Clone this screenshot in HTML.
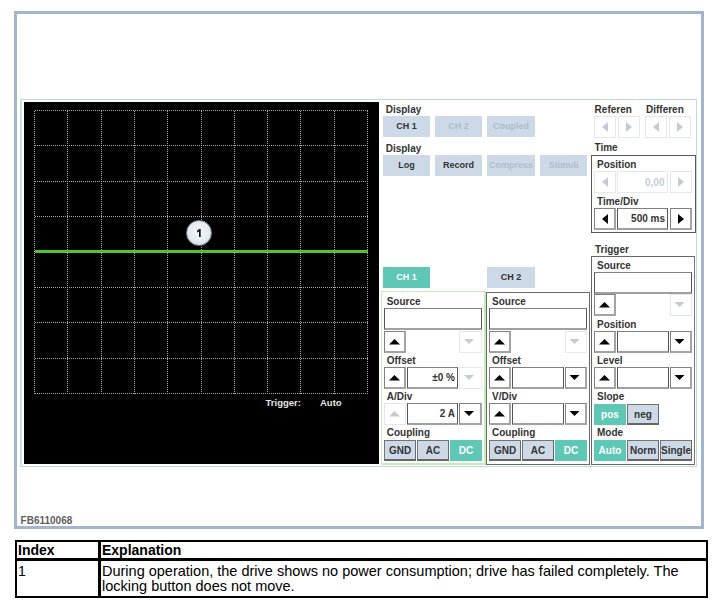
<!DOCTYPE html><html><head><meta charset="utf-8"><style>
html,body{margin:0;padding:0;background:#fff;width:718px;height:612px;overflow:hidden;position:relative;font-family:"Liberation Sans",sans-serif;}
.t{position:absolute;line-height:1;white-space:nowrap;}
</style></head><body>
<div style="position:absolute;left:14px;top:11px;width:690px;height:518px;box-sizing:border-box;border:3px solid #a2b5ca;"></div>
<div style="position:absolute;left:20px;top:99px;width:677px;height:368px;box-sizing:border-box;border:1px solid #bcdcd4;border-left:2px solid #c8e4dc;"></div>
<div style="position:absolute;left:24px;top:102px;width:355px;height:362px;box-sizing:border-box;background:#000;"></div>
<svg style="position:absolute;left:0;top:0" width="718" height="612"><g stroke="#a8adb2" stroke-width="1" stroke-dasharray="1 1" fill="none" shape-rendering="crispEdges"><line x1="34.50" y1="110.5" x2="34.50" y2="393.5"/><line x1="67.80" y1="110.5" x2="67.80" y2="393.5"/><line x1="101.10" y1="110.5" x2="101.10" y2="393.5"/><line x1="134.40" y1="110.5" x2="134.40" y2="393.5"/><line x1="167.70" y1="110.5" x2="167.70" y2="393.5"/><line x1="201.00" y1="110.5" x2="201.00" y2="393.5"/><line x1="234.30" y1="110.5" x2="234.30" y2="393.5"/><line x1="267.60" y1="110.5" x2="267.60" y2="393.5"/><line x1="300.90" y1="110.5" x2="300.90" y2="393.5"/><line x1="334.20" y1="110.5" x2="334.20" y2="393.5"/><line x1="367.50" y1="110.5" x2="367.50" y2="393.5"/><line x1="34.5" y1="110.50" x2="367.5" y2="110.50"/><line x1="34.5" y1="145.88" x2="367.5" y2="145.88"/><line x1="34.5" y1="181.25" x2="367.5" y2="181.25"/><line x1="34.5" y1="216.62" x2="367.5" y2="216.62"/><line x1="34.5" y1="252.00" x2="367.5" y2="252.00"/><line x1="34.5" y1="287.38" x2="367.5" y2="287.38"/><line x1="34.5" y1="322.75" x2="367.5" y2="322.75"/><line x1="34.5" y1="358.12" x2="367.5" y2="358.12"/><line x1="34.5" y1="393.50" x2="367.5" y2="393.50"/></g><rect x="35" y="250" width="333" height="3" fill="#52c22e"/></svg>
<div class="t" style="left:385.7px;top:105.33px;font-size:10px;font-weight:bold;color:#333;">Display</div>
<div style="position:absolute;left:383px;top:116px;width:47px;height:21px;box-sizing:border-box;background:#cdd9e6;"></div>
<div class="t" style="left:383px;top:121.88px;width:47px;font-size:9px;font-weight:bold;color:#333;text-align:center;">CH 1</div>
<div style="position:absolute;left:435px;top:116px;width:47px;height:21px;box-sizing:border-box;background:#cdd9e6;"></div>
<div class="t" style="left:435px;top:121.88px;width:47px;font-size:9px;font-weight:bold;color:#aebccb;text-align:center;">CH 2</div>
<div style="position:absolute;left:487px;top:116px;width:48px;height:21px;box-sizing:border-box;background:#cdd9e6;"></div>
<div class="t" style="left:487px;top:121.88px;width:48px;font-size:9px;font-weight:bold;color:#aebccb;text-align:center;">Coupled</div>
<div class="t" style="left:385.7px;top:143.84px;font-size:10px;font-weight:bold;color:#333;">Display</div>
<div style="position:absolute;left:383px;top:155px;width:47px;height:21px;box-sizing:border-box;background:#cdd9e6;"></div>
<div class="t" style="left:383px;top:160.88px;width:47px;font-size:9px;font-weight:bold;color:#333;text-align:center;">Log</div>
<div style="position:absolute;left:435px;top:155px;width:47px;height:21px;box-sizing:border-box;background:#cdd9e6;"></div>
<div class="t" style="left:435px;top:160.88px;width:47px;font-size:9px;font-weight:bold;color:#333;text-align:center;">Record</div>
<div style="position:absolute;left:487px;top:155px;width:48px;height:21px;box-sizing:border-box;background:#cdd9e6;"></div>
<div class="t" style="left:487px;top:160.88px;width:48px;font-size:9px;font-weight:bold;color:#aebccb;text-align:center;">Compress</div>
<div style="position:absolute;left:540px;top:155px;width:47px;height:21px;box-sizing:border-box;background:#cdd9e6;"></div>
<div class="t" style="left:540px;top:160.88px;width:47px;font-size:9px;font-weight:bold;color:#aebccb;text-align:center;">Stimuli</div>
<div class="t" style="left:594.6px;top:104.93px;font-size:10px;font-weight:bold;color:#333;">Referen</div>
<div class="t" style="left:646px;top:104.93px;font-size:10px;font-weight:bold;color:#333;">Differen</div>
<div style="position:absolute;left:594px;top:116px;width:22px;height:22px;box-sizing:border-box;background:#fff;border:1px solid #e4e8ee;"></div>
<div style="position:absolute;left:618px;top:116px;width:22px;height:22px;box-sizing:border-box;background:#fff;border:1px solid #e4e8ee;"></div>
<div style="position:absolute;left:645px;top:116px;width:22px;height:22px;box-sizing:border-box;background:#fff;border:1px solid #e4e8ee;"></div>
<div style="position:absolute;left:669px;top:116px;width:22px;height:22px;box-sizing:border-box;background:#fff;border:1px solid #e4e8ee;"></div>
<div class="t" style="left:594.5px;top:143.03px;font-size:10px;font-weight:bold;color:#333;">Time</div>
<div style="position:absolute;left:591px;top:155px;width:105px;height:78px;box-sizing:border-box;border:1px solid #5a5a5a;"></div>
<div class="t" style="left:597px;top:159.84px;font-size:10px;font-weight:bold;color:#333;">Position</div>
<div style="position:absolute;left:594px;top:171px;width:22px;height:22px;box-sizing:border-box;background:#fff;border:1px solid #e4e8ee;"></div>
<div style="position:absolute;left:617px;top:171px;width:51px;height:22px;box-sizing:border-box;background:#fff;border:1px solid #e4e8ee;"></div>
<div class="t" style="right:53.5px;top:177.53px;font-size:10px;font-weight:bold;color:#c2ccd8;text-align:right;">0,00</div>
<div style="position:absolute;left:670px;top:171px;width:22px;height:22px;box-sizing:border-box;background:#fff;border:1px solid #e4e8ee;"></div>
<div class="t" style="left:597px;top:196.94px;font-size:10px;font-weight:bold;color:#333;">Time/Div</div>
<div style="position:absolute;left:594px;top:208px;width:22px;height:22px;box-sizing:border-box;background:#fff;border:1px solid #808080;border-bottom:2px solid #a4a4a4;border-right:2px solid #a4a4a4;"></div>
<div style="position:absolute;left:617px;top:208px;width:51px;height:22px;box-sizing:border-box;background:#fff;border:1px solid #808080;border-left-color:#555;border-right-color:#555;border-bottom:2px solid #a0a0a0;"></div>
<div class="t" style="right:53px;top:214.03px;font-size:10px;font-weight:bold;color:#333;text-align:right;">500 ms</div>
<div style="position:absolute;left:670px;top:208px;width:22px;height:22px;box-sizing:border-box;background:#fff;border:1px solid #808080;border-bottom:2px solid #a4a4a4;border-right:2px solid #a4a4a4;"></div>
<div class="t" style="left:595px;top:244.94px;font-size:10px;font-weight:bold;color:#333;">Trigger</div>
<div style="position:absolute;left:591px;top:256px;width:104px;height:209px;box-sizing:border-box;border:1px solid #666;border-right:1px solid #777;"></div>
<div class="t" style="left:597px;top:261.04px;font-size:10px;font-weight:bold;color:#333;">Source</div>
<div style="position:absolute;left:594px;top:272px;width:98px;height:22px;box-sizing:border-box;background:#fff;border:1px solid #808080;border-left-color:#555;border-right-color:#555;border-bottom:2px solid #a0a0a0;"></div>
<div style="position:absolute;left:594px;top:294px;width:22px;height:22px;box-sizing:border-box;background:#fff;border:1px solid #808080;border-bottom:2px solid #a4a4a4;border-right:2px solid #a4a4a4;"></div>
<div style="position:absolute;left:670px;top:294px;width:22px;height:22px;box-sizing:border-box;background:#fff;border:1px solid #e4e8ee;"></div>
<div class="t" style="left:597px;top:320.34px;font-size:10px;font-weight:bold;color:#333;">Position</div>
<div style="position:absolute;left:594px;top:331px;width:22px;height:22px;box-sizing:border-box;background:#fff;border:1px solid #808080;border-bottom:2px solid #a4a4a4;border-right:2px solid #a4a4a4;"></div>
<div style="position:absolute;left:617px;top:331px;width:52px;height:22px;box-sizing:border-box;background:#fff;border:1px solid #808080;border-left-color:#555;border-right-color:#555;border-bottom:2px solid #a0a0a0;"></div>
<div style="position:absolute;left:670px;top:331px;width:22px;height:22px;box-sizing:border-box;background:#fff;border:1px solid #808080;border-bottom:2px solid #a4a4a4;border-right:2px solid #a4a4a4;"></div>
<div class="t" style="left:597px;top:356.34px;font-size:10px;font-weight:bold;color:#333;">Level</div>
<div style="position:absolute;left:594px;top:367px;width:22px;height:22px;box-sizing:border-box;background:#fff;border:1px solid #808080;border-bottom:2px solid #a4a4a4;border-right:2px solid #a4a4a4;"></div>
<div style="position:absolute;left:617px;top:367px;width:52px;height:22px;box-sizing:border-box;background:#fff;border:1px solid #808080;border-left-color:#555;border-right-color:#555;border-bottom:2px solid #a0a0a0;"></div>
<div style="position:absolute;left:670px;top:367px;width:22px;height:22px;box-sizing:border-box;background:#fff;border:1px solid #808080;border-bottom:2px solid #a4a4a4;border-right:2px solid #a4a4a4;"></div>
<div class="t" style="left:597px;top:392.34px;font-size:10px;font-weight:bold;color:#333;">Slope</div>
<div style="position:absolute;left:594px;top:404px;width:32px;height:21px;box-sizing:border-box;background:#5ec7b6;"></div>
<div class="t" style="left:594px;top:410.34px;width:32px;font-size:10px;font-weight:bold;color:#fff;text-align:center;">pos</div>
<div style="position:absolute;left:627px;top:404px;width:32px;height:21px;box-sizing:border-box;background:#cdd9e6;border:1px solid #747474;border-bottom:2px solid #666;border-right:1px solid #6a6a6a;"></div>
<div class="t" style="left:627px;top:410.34px;width:32px;font-size:10px;font-weight:bold;color:#333;text-align:center;">neg</div>
<div class="t" style="left:597px;top:428.34px;font-size:10px;font-weight:bold;color:#333;">Mode</div>
<div style="position:absolute;left:594px;top:440px;width:32px;height:21px;box-sizing:border-box;background:#5ec7b6;"></div>
<div class="t" style="left:594px;top:446.34px;width:32px;font-size:10px;font-weight:bold;color:#fff;text-align:center;">Auto</div>
<div style="position:absolute;left:627px;top:440px;width:32px;height:21px;box-sizing:border-box;background:#cdd9e6;border:1px solid #747474;border-bottom:2px solid #666;border-right:1px solid #6a6a6a;"></div>
<div class="t" style="left:627px;top:446.34px;width:32px;font-size:10px;font-weight:bold;color:#333;text-align:center;">Norm</div>
<div style="position:absolute;left:660px;top:440px;width:32px;height:21px;box-sizing:border-box;background:#cdd9e6;border:1px solid #747474;border-bottom:2px solid #666;border-right:1px solid #6a6a6a;"></div>
<div class="t" style="left:660px;top:446.34px;width:32px;font-size:10px;font-weight:bold;color:#333;text-align:center;">Single</div>
<div style="position:absolute;left:383px;top:267px;width:47px;height:21px;box-sizing:border-box;background:#5ec7b6;"></div>
<div class="t" style="left:383px;top:272.88px;width:47px;font-size:9px;font-weight:bold;color:#fff;text-align:center;">CH 1</div>
<div style="position:absolute;left:381px;top:291px;width:105px;height:174px;box-sizing:border-box;border:1px solid #c6ecb8;border-width:1px 2px 2px 1px;"></div>
<div class="t" style="left:386.7px;top:297.14px;font-size:10px;font-weight:bold;color:#333;">Source</div>
<div style="position:absolute;left:384px;top:308px;width:98px;height:22px;box-sizing:border-box;background:#fff;border:1px solid #808080;border-left-color:#555;border-right-color:#555;border-bottom:2px solid #a0a0a0;"></div>
<div style="position:absolute;left:384px;top:331px;width:22px;height:22px;box-sizing:border-box;background:#fff;border:1px solid #808080;border-bottom:2px solid #a4a4a4;border-right:2px solid #a4a4a4;"></div>
<div style="position:absolute;left:459px;top:331px;width:23px;height:22px;box-sizing:border-box;background:#fff;border:1px solid #e4e8ee;"></div>
<div class="t" style="left:386.7px;top:356.34px;font-size:10px;font-weight:bold;color:#333;">Offset</div>
<div style="position:absolute;left:384px;top:367px;width:22px;height:22px;box-sizing:border-box;background:#fff;border:1px solid #808080;border-bottom:2px solid #a4a4a4;border-right:2px solid #a4a4a4;"></div>
<div style="position:absolute;left:407px;top:367px;width:51px;height:22px;box-sizing:border-box;background:#fff;border:1px solid #808080;border-left-color:#555;border-right-color:#555;border-bottom:2px solid #a0a0a0;"></div>
<div class="t" style="right:263px;top:373.04px;font-size:10px;font-weight:bold;color:#333;text-align:right;">&plusmn;0 %</div>
<div style="position:absolute;left:459px;top:367px;width:23px;height:22px;box-sizing:border-box;background:#fff;border:1px solid #e4e8ee;"></div>
<div class="t" style="left:386.7px;top:392.34px;font-size:10px;font-weight:bold;color:#333;">A/Div</div>
<div style="position:absolute;left:384px;top:403px;width:22px;height:22px;box-sizing:border-box;background:#fff;border:1px solid #e4e8ee;"></div>
<div style="position:absolute;left:407px;top:403px;width:51px;height:22px;box-sizing:border-box;background:#fff;border:1px solid #808080;border-left-color:#555;border-right-color:#555;border-bottom:2px solid #a0a0a0;"></div>
<div class="t" style="right:263px;top:409.04px;font-size:10px;font-weight:bold;color:#333;text-align:right;">2 A</div>
<div style="position:absolute;left:459px;top:403px;width:23px;height:22px;box-sizing:border-box;background:#fff;border:1px solid #808080;border-bottom:2px solid #a4a4a4;border-right:2px solid #a4a4a4;"></div>
<div class="t" style="left:386.7px;top:428.34px;font-size:10px;font-weight:bold;color:#333;">Coupling</div>
<div style="position:absolute;left:384px;top:440px;width:32px;height:21px;box-sizing:border-box;background:#cdd9e6;border:1px solid #747474;border-bottom:2px solid #666;border-right:1px solid #6a6a6a;"></div>
<div class="t" style="left:384px;top:446.34px;width:32px;font-size:10px;font-weight:bold;color:#333;text-align:center;">GND</div>
<div style="position:absolute;left:417px;top:440px;width:32px;height:21px;box-sizing:border-box;background:#cdd9e6;border:1px solid #747474;border-bottom:2px solid #666;border-right:1px solid #6a6a6a;"></div>
<div class="t" style="left:417px;top:446.34px;width:32px;font-size:10px;font-weight:bold;color:#333;text-align:center;">AC</div>
<div style="position:absolute;left:450px;top:440px;width:32px;height:21px;box-sizing:border-box;background:#5ec7b6;"></div>
<div class="t" style="left:450px;top:446.34px;width:32px;font-size:10px;font-weight:bold;color:#fff;text-align:center;">DC</div>
<div style="position:absolute;left:487px;top:267px;width:48px;height:21px;box-sizing:border-box;background:#cdd9e6;"></div>
<div class="t" style="left:487px;top:272.88px;width:48px;font-size:9px;font-weight:bold;color:#333;text-align:center;">CH 2</div>
<div style="position:absolute;left:486px;top:292px;width:104px;height:173px;box-sizing:border-box;border:1px solid #6a6a6a;"></div>
<div class="t" style="left:492px;top:297.14px;font-size:10px;font-weight:bold;color:#333;">Source</div>
<div style="position:absolute;left:489px;top:308px;width:98px;height:22px;box-sizing:border-box;background:#fff;border:1px solid #808080;border-left-color:#555;border-right-color:#555;border-bottom:2px solid #a0a0a0;"></div>
<div style="position:absolute;left:489px;top:331px;width:22px;height:22px;box-sizing:border-box;background:#fff;border:1px solid #808080;border-bottom:2px solid #a4a4a4;border-right:2px solid #a4a4a4;"></div>
<div style="position:absolute;left:565px;top:331px;width:22px;height:22px;box-sizing:border-box;background:#fff;border:1px solid #e4e8ee;"></div>
<div class="t" style="left:492px;top:356.34px;font-size:10px;font-weight:bold;color:#333;">Offset</div>
<div style="position:absolute;left:489px;top:367px;width:22px;height:22px;box-sizing:border-box;background:#fff;border:1px solid #808080;border-bottom:2px solid #a4a4a4;border-right:2px solid #a4a4a4;"></div>
<div style="position:absolute;left:512px;top:367px;width:52px;height:22px;box-sizing:border-box;background:#fff;border:1px solid #808080;border-left-color:#555;border-right-color:#555;border-bottom:2px solid #a0a0a0;"></div>
<div style="position:absolute;left:565px;top:367px;width:22px;height:22px;box-sizing:border-box;background:#fff;border:1px solid #808080;border-bottom:2px solid #a4a4a4;border-right:2px solid #a4a4a4;"></div>
<div class="t" style="left:492px;top:392.34px;font-size:10px;font-weight:bold;color:#333;">V/Div</div>
<div style="position:absolute;left:489px;top:403px;width:22px;height:22px;box-sizing:border-box;background:#fff;border:1px solid #808080;border-bottom:2px solid #a4a4a4;border-right:2px solid #a4a4a4;"></div>
<div style="position:absolute;left:512px;top:403px;width:52px;height:22px;box-sizing:border-box;background:#fff;border:1px solid #808080;border-left-color:#555;border-right-color:#555;border-bottom:2px solid #a0a0a0;"></div>
<div style="position:absolute;left:565px;top:403px;width:22px;height:22px;box-sizing:border-box;background:#fff;border:1px solid #808080;border-bottom:2px solid #a4a4a4;border-right:2px solid #a4a4a4;"></div>
<div class="t" style="left:492px;top:428.34px;font-size:10px;font-weight:bold;color:#333;">Coupling</div>
<div style="position:absolute;left:489px;top:440px;width:32px;height:21px;box-sizing:border-box;background:#cdd9e6;border:1px solid #747474;border-bottom:2px solid #666;border-right:1px solid #6a6a6a;"></div>
<div class="t" style="left:489px;top:446.34px;width:32px;font-size:10px;font-weight:bold;color:#333;text-align:center;">GND</div>
<div style="position:absolute;left:522px;top:440px;width:32px;height:21px;box-sizing:border-box;background:#cdd9e6;border:1px solid #747474;border-bottom:2px solid #666;border-right:1px solid #6a6a6a;"></div>
<div class="t" style="left:522px;top:446.34px;width:32px;font-size:10px;font-weight:bold;color:#333;text-align:center;">AC</div>
<div style="position:absolute;left:555px;top:440px;width:32px;height:21px;box-sizing:border-box;background:#5ec7b6;"></div>
<div class="t" style="left:555px;top:446.34px;width:32px;font-size:10px;font-weight:bold;color:#fff;text-align:center;">DC</div>
<div class="t" style="left:265.6px;top:397.76px;font-size:9.5px;font-weight:bold;color:#e6e6e6;">Trigger:</div>
<div class="t" style="left:320px;top:397.76px;font-size:9.5px;font-weight:bold;color:#e6e6e6;">Auto</div>
<div style="position:absolute;left:186px;top:220px;width:26px;height:26px;border-radius:50%;box-sizing:border-box;border:1px solid #7d858f;background:radial-gradient(circle at 50% 45%,#f4f7fa 0%,#e4eaf0 60%,#cdd5de 78%,#f0f3f6 90%,#aeb6c0 100%);"></div>
<svg style="position:absolute;left:0;top:0" width="718" height="612"><path d="M199 229 H200.7 V237 H199 V231.6 L197 232.4 V231 Z" fill="#111"/></svg>
<div class="t" style="left:20.6px;top:515.63px;font-size:10px;font-weight:bold;color:#5e5e5e;">FB6110068</div>
<div style="position:absolute;left:15px;top:540px;width:693px;height:58px;box-sizing:border-box;border:2px solid #000;"></div>
<div style="position:absolute;left:15px;top:558px;width:693px;height:3px;box-sizing:border-box;background:#000;"></div>
<div style="position:absolute;left:98px;top:540px;width:3px;height:58px;box-sizing:border-box;background:#000;"></div>
<div class="t" style="left:18px;top:543.45px;font-size:14px;font-weight:bold;color:#000;">Index</div>
<div class="t" style="left:102px;top:543.45px;font-size:14px;font-weight:bold;color:#000;">Explanation</div>
<div class="t" style="left:18px;top:563.95px;font-size:14px;font-weight:normal;color:#000;">1</div>
<div class="t" style="left:102px;top:563.53px;font-size:14.5px;font-weight:normal;color:#000;">During operation, the drive shows no power consumption; drive has failed completely. The</div>
<div class="t" style="left:102px;top:579.03px;font-size:14.5px;font-weight:normal;color:#000;">locking button does not move.</div>
<svg style="position:absolute;left:0;top:0" width="718" height="612"><polygon points="608.0,122.0 608.0,132.0 602.0,127.0" fill="#c2ccd8"/><polygon points="626.0,122.0 626.0,132.0 632.0,127.0" fill="#c2ccd8"/><polygon points="659.0,122.0 659.0,132.0 653.0,127.0" fill="#c2ccd8"/><polygon points="677.0,122.0 677.0,132.0 683.0,127.0" fill="#c2ccd8"/><polygon points="608.0,177.0 608.0,187.0 602.0,182.0" fill="#c2ccd8"/><polygon points="678.0,177.0 678.0,187.0 684.0,182.0" fill="#c2ccd8"/><polygon points="608.0,214.0 608.0,224.0 602.0,219.0" fill="#000"/><polygon points="678.0,214.0 678.0,224.0 684.0,219.0" fill="#000"/><polygon points="599.0,307.45 610.0,307.45 604.5,301.95" fill="#000"/><polygon points="674.5,301.9 684.5,301.9 679.5,306.9" fill="#c2ccd8"/><polygon points="599.0,344.45 610.0,344.45 604.5,338.95" fill="#000"/><polygon points="674.5,338.9 684.5,338.9 679.5,343.9" fill="#000"/><polygon points="599.0,380.45 610.0,380.45 604.5,374.95" fill="#000"/><polygon points="674.5,374.9 684.5,374.9 679.5,379.9" fill="#000"/><polygon points="389.0,344.45 400.0,344.45 394.5,338.95" fill="#000"/><polygon points="464.0,338.9 474.0,338.9 469.0,343.9" fill="#c2ccd8"/><polygon points="389.0,380.45 400.0,380.45 394.5,374.95" fill="#000"/><polygon points="464.0,374.9 474.0,374.9 469.0,379.9" fill="#c2ccd8"/><polygon points="389.0,416.45 400.0,416.45 394.5,410.95" fill="#c2ccd8"/><polygon points="464.0,410.9 474.0,410.9 469.0,415.9" fill="#000"/><polygon points="494.0,344.45 505.0,344.45 499.5,338.95" fill="#000"/><polygon points="569.5,338.9 579.5,338.9 574.5,343.9" fill="#c2ccd8"/><polygon points="494.0,380.45 505.0,380.45 499.5,374.95" fill="#000"/><polygon points="569.5,374.9 579.5,374.9 574.5,379.9" fill="#000"/><polygon points="494.0,416.45 505.0,416.45 499.5,410.95" fill="#000"/><polygon points="569.5,410.9 579.5,410.9 574.5,415.9" fill="#000"/></svg>
</body></html>
